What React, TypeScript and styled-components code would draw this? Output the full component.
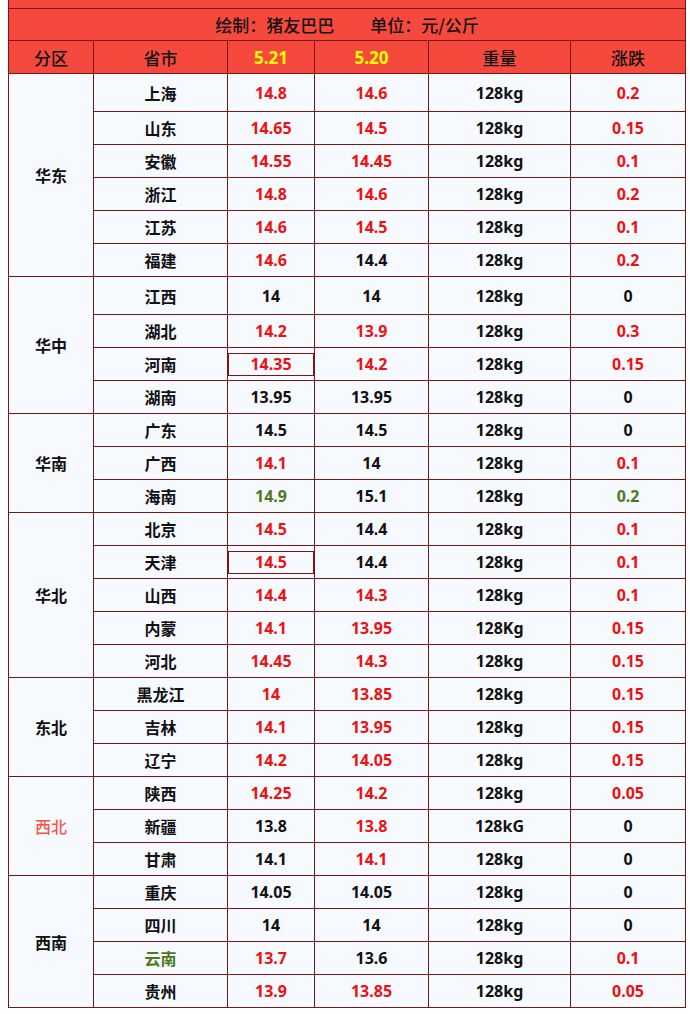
import styled, { createGlobalStyle } from "styled-components";

type Tone = "red" | "black" | "green";

interface Cell {
  v: string
  tone?: Tone
  boxed?: boolean
}

interface Row {
  city: string
  cityTone?: Tone
  d1: Cell
  d2: Cell
  w: string
  chg: Cell
  tall?: boolean
}

interface Group {
  name: string
  nameTone?: "pink"
  rows: Row[]
}

const GlobalStyle = createGlobalStyle`
  body {
    margin: 0;
    background: #ffffff;
    font-family: "Noto Sans", "Noto Sans CJK SC", sans-serif;
  }
`

const Wrap = styled.div`
  padding-left: 8px;
  width: 677px;
`

const Table = styled.table`
  width: 677px;
  border-collapse: collapse;
  table-layout: fixed;
  border: 1px solid #7b1616;
  border-top: none;
`

const StripCell = styled.td`
  height: 8px;
  padding: 0;
  background: #f5493d;
  border: 1px solid #7b1616;
  border-top: none;
`

const TitleCell = styled.td`
  height: 31px;
  padding: 0;
  background: #f5493d;
  border: 1px solid #7b1616;
  text-align: center;
  font-family: "Noto Sans CJK SC", sans-serif;
  font-size: 17px;
  font-weight: 500;
  color: #111;
`

const TitlePart = styled.span`
  margin: 0 18px;
`

const HeadCell = styled.th<{ $yellow?: boolean }>`
  height: 32px;
  padding: 0;
  background: #f5493d;
  border: 1px solid #7b1616;
  font-family: ${p => p.$yellow ? '"Noto Sans", sans-serif' : '"Noto Sans CJK SC", sans-serif'};
  font-size: 17px;
  font-weight: ${p => p.$yellow ? 700 : 500};
  color: ${p => p.$yellow ? '#ffff00' : '#111'};
`

const BodyRow = styled.tr<{ $tall?: boolean }>`
  height: ${p => p.$tall ? 38 : 33}px;
`

const toneColor = (t?: Tone | "pink") => {
  if (t === "red") return "#ee1111"
  if (t === "green") return "#4d7a1e"
  if (t === "pink") return "#f0584a"
  return "#111111"
}

const Td = styled.td<{ $tone?: Tone | "pink"; $cjk?: boolean }>`
  padding: 0;
  background: #f6f9fd;
  border: 1px solid #7b1616;
  text-align: center;
  vertical-align: middle;
  font-family: ${p => p.$cjk ? '"Noto Sans CJK SC", sans-serif' : '"Noto Sans", "Noto Sans CJK SC", sans-serif'};
  font-size: 16px;
  font-weight: ${p => p.$tone === "pink" ? 500 : 700};
  color: ${p => toneColor(p.$tone)};
`

const Boxed = styled.div`
  height: 21px;
  line-height: 21px;
  border: 1px solid #7b1616;
`

const data: Group[] = [
  {
    name: "华东",
    rows: [
      { city: "上海", d1: { v: "14.8", tone: "red" }, d2: { v: "14.6", tone: "red" }, w: "128kg", chg: { v: "0.2", tone: "red" }, tall: true },
      { city: "山东", d1: { v: "14.65", tone: "red" }, d2: { v: "14.5", tone: "red" }, w: "128kg", chg: { v: "0.15", tone: "red" } },
      { city: "安徽", d1: { v: "14.55", tone: "red" }, d2: { v: "14.45", tone: "red" }, w: "128kg", chg: { v: "0.1", tone: "red" } },
      { city: "浙江", d1: { v: "14.8", tone: "red" }, d2: { v: "14.6", tone: "red" }, w: "128kg", chg: { v: "0.2", tone: "red" } },
      { city: "江苏", d1: { v: "14.6", tone: "red" }, d2: { v: "14.5", tone: "red" }, w: "128kg", chg: { v: "0.1", tone: "red" } },
      { city: "福建", d1: { v: "14.6", tone: "red" }, d2: { v: "14.4" }, w: "128kg", chg: { v: "0.2", tone: "red" } },
    ],
  },
  {
    name: "华中",
    rows: [
      { city: "江西", d1: { v: "14" }, d2: { v: "14" }, w: "128kg", chg: { v: "0" }, tall: true },
      { city: "湖北", d1: { v: "14.2", tone: "red" }, d2: { v: "13.9", tone: "red" }, w: "128kg", chg: { v: "0.3", tone: "red" } },
      { city: "河南", d1: { v: "14.35", tone: "red", boxed: true }, d2: { v: "14.2", tone: "red" }, w: "128kg", chg: { v: "0.15", tone: "red" } },
      { city: "湖南", d1: { v: "13.95" }, d2: { v: "13.95" }, w: "128kg", chg: { v: "0" } },
    ],
  },
  {
    name: "华南",
    rows: [
      { city: "广东", d1: { v: "14.5" }, d2: { v: "14.5" }, w: "128kg", chg: { v: "0" } },
      { city: "广西", d1: { v: "14.1", tone: "red" }, d2: { v: "14" }, w: "128kg", chg: { v: "0.1", tone: "red" } },
      { city: "海南", d1: { v: "14.9", tone: "green" }, d2: { v: "15.1" }, w: "128kg", chg: { v: "0.2", tone: "green" } },
    ],
  },
  {
    name: "华北",
    rows: [
      { city: "北京", d1: { v: "14.5", tone: "red" }, d2: { v: "14.4" }, w: "128kg", chg: { v: "0.1", tone: "red" } },
      { city: "天津", d1: { v: "14.5", tone: "red", boxed: true }, d2: { v: "14.4" }, w: "128kg", chg: { v: "0.1", tone: "red" } },
      { city: "山西", d1: { v: "14.4", tone: "red" }, d2: { v: "14.3", tone: "red" }, w: "128kg", chg: { v: "0.1", tone: "red" } },
      { city: "内蒙", d1: { v: "14.1", tone: "red" }, d2: { v: "13.95", tone: "red" }, w: "128Kg", chg: { v: "0.15", tone: "red" } },
      { city: "河北", d1: { v: "14.45", tone: "red" }, d2: { v: "14.3", tone: "red" }, w: "128kg", chg: { v: "0.15", tone: "red" } },
    ],
  },
  {
    name: "东北",
    rows: [
      { city: "黑龙江", d1: { v: "14", tone: "red" }, d2: { v: "13.85", tone: "red" }, w: "128kg", chg: { v: "0.15", tone: "red" } },
      { city: "吉林", d1: { v: "14.1", tone: "red" }, d2: { v: "13.95", tone: "red" }, w: "128kg", chg: { v: "0.15", tone: "red" } },
      { city: "辽宁", d1: { v: "14.2", tone: "red" }, d2: { v: "14.05", tone: "red" }, w: "128kg", chg: { v: "0.15", tone: "red" } },
    ],
  },
  {
    name: "西北",
    nameTone: "pink",
    rows: [
      { city: "陕西", d1: { v: "14.25", tone: "red" }, d2: { v: "14.2", tone: "red" }, w: "128kg", chg: { v: "0.05", tone: "red" } },
      { city: "新疆", d1: { v: "13.8" }, d2: { v: "13.8", tone: "red" }, w: "128kG", chg: { v: "0" } },
      { city: "甘肃", d1: { v: "14.1" }, d2: { v: "14.1", tone: "red" }, w: "128kg", chg: { v: "0" } },
    ],
  },
  {
    name: "西南",
    rows: [
      { city: "重庆", d1: { v: "14.05" }, d2: { v: "14.05" }, w: "128kg", chg: { v: "0" } },
      { city: "四川", d1: { v: "14" }, d2: { v: "14" }, w: "128kg", chg: { v: "0" } },
      { city: "云南", cityTone: "green", d1: { v: "13.7", tone: "red" }, d2: { v: "13.6" }, w: "128kg", chg: { v: "0.1", tone: "red" } },
      { city: "贵州", d1: { v: "13.9", tone: "red" }, d2: { v: "13.85", tone: "red" }, w: "128kg", chg: { v: "0.05", tone: "red" } },
    ],
  },
]

const ValueCell = ({ cell }: { cell: Cell }) => (
  <Td $tone={cell.tone}>
    {cell.boxed ? <Boxed>{cell.v}</Boxed> : cell.v}
  </Td>
)

const App = () => {
  return (
    <>
      <GlobalStyle />
      <Wrap>
        <Table>
          <colgroup>
            <col style={{ width: 85 }} />
            <col style={{ width: 134 }} />
            <col style={{ width: 87 }} />
            <col style={{ width: 114 }} />
            <col style={{ width: 142 }} />
            <col style={{ width: 115 }} />
          </colgroup>
          <thead>
            <tr>
              <StripCell colSpan={6} />
            </tr>
            <tr>
              <TitleCell colSpan={6}>
                <TitlePart>绘制：猪友巴巴</TitlePart>
                <TitlePart>单位：元/公斤</TitlePart>
              </TitleCell>
            </tr>
            <tr>
              <HeadCell>分区</HeadCell>
              <HeadCell>省市</HeadCell>
              <HeadCell $yellow>5.21</HeadCell>
              <HeadCell $yellow>5.20</HeadCell>
              <HeadCell>重量</HeadCell>
              <HeadCell>涨跌</HeadCell>
            </tr>
          </thead>
          <tbody>
            {data.map(group =>
              group.rows.map((row, i) => (
                <BodyRow key={group.name + row.city} $tall={row.tall}>
                  {i === 0 && (
                    <Td $cjk $tone={group.nameTone} rowSpan={group.rows.length}>
                      {group.name}
                    </Td>
                  )}
                  <Td $cjk $tone={row.cityTone}>{row.city}</Td>
                  <ValueCell cell={row.d1} />
                  <ValueCell cell={row.d2} />
                  <Td>{row.w}</Td>
                  <ValueCell cell={row.chg} />
                </BodyRow>
              ))
            )}
          </tbody>
        </Table>
      </Wrap>
    </>
  )
}

export default App
